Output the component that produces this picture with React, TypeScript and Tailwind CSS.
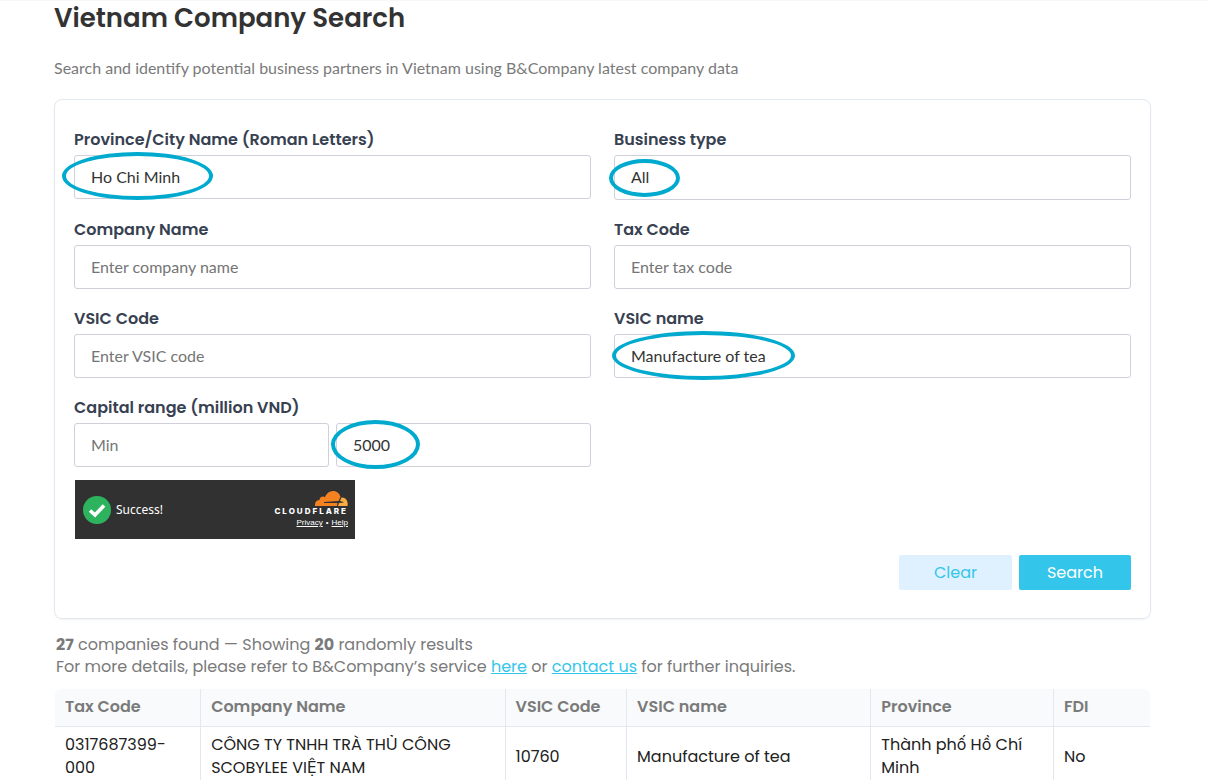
import type { ReactNode } from "react";

const inputClass =
  "block w-full rounded-[3px] border border-[#cfd0dc] bg-white px-4 pb-0.5 font-[Lato,sans-serif] text-base text-[#333] placeholder:text-[#757575] outline-none focus:border-[#34c6ea]";

const columns = [
  { title: "Tax Code", width: "w-[13.3%]" },
  { title: "Company Name", width: "w-[27.8%]" },
  { title: "VSIC Code", width: "w-[11.1%]" },
  { title: "VSIC name", width: "w-[22.3%]" },
  { title: "Province", width: "w-[16.7%]" },
  { title: "FDI", width: "w-[8.8%]" },
];

const rows = [
  [
    "0317687399-000",
    "CÔNG TY TNHH TRÀ THỦ CÔNG SCOBYLEE VIỆT NAM",
    "10760",
    "Manufacture of tea",
    "Thành phố Hồ Chí Minh",
    "No",
  ],
];

function Ring({ className }: { className: string }) {
  return (
    <span
      className={`pointer-events-none absolute rounded-[50%] border-4 border-[#00aace] ${className}`}
    />
  );
}

function Field({ id, label, children }: { id: string; label: string; children: ReactNode }) {
  return (
    <div>
      <label htmlFor={id} className="mb-[3px] block text-base leading-6 font-semibold text-[#374151]">
        {label}
      </label>
      <div className="relative">{children}</div>
    </div>
  );
}

function CloudflareLogo() {
  return (
    <svg viewBox="0 0 66 30" className="h-[15px] w-[33px]" aria-hidden="true">
      <path
        fill="#f6821f"
        d="M0 30C-1 22 4 18 9 18C9 12 15 9 20 12C23 4 29 0 36 0C44 0 49 5 51 12L47 20L18 22L18 24L45 24L44 30Z"
      />
      <path
        fill="#fbad41"
        d="M53 13C61 12 67 20 65 30H46L48 24L57 23V22L50 20Z"
      />
    </svg>
  );
}

function Turnstile() {
  return (
    <div className="mt-[13px] ml-px flex h-[59px] w-[280px] items-center bg-[#313131] px-[7px] font-['Noto_Sans',sans-serif] text-white">
      <svg viewBox="0 0 28 28" className="ml-px size-7" aria-hidden="true">
        <circle cx="14" cy="14" r="14" fill="#2db35e" />
        <path d="M7 14.5L12 19L21 9.5" fill="none" stroke="#fff" strokeWidth="3.6" />
      </svg>
      <span className="ml-[5px] text-xs">Success!</span>
      <div className="ml-auto flex flex-col items-end">
        <CloudflareLogo />
        <span className="font-[Inter,sans-serif] text-[8px] leading-[11px] font-extrabold tracking-[2px]">
          CLOUDFLARE
        </span>
        <span className="flex gap-[3px] font-['Liberation_Sans',sans-serif] text-[8px] leading-[11px]">
          <a href="#privacy" className="underline">Privacy</a>
          <span>•</span>
          <a href="#help" className="underline">Help</a>
        </span>
      </div>
    </div>
  );
}

export default function App() {
  return (
    <main className="border-t border-[#f7f7f7] bg-white pr-14 pl-[54px] font-[Poppins,Inter,sans-serif]">
      <h1 className="text-[26px] leading-[35px] font-semibold text-[#333]">Vietnam Company Search</h1>
      <p className="mt-5 font-[Lato,sans-serif] text-base leading-6 text-[#7a7a7a]">
        Search and identify potential business partners in Vietnam using B&amp;Company latest company data
      </p>

      <form
        className="mt-[19px] rounded-lg border border-[#e2e8f0] px-[19px] py-7 shadow-xs"
        onSubmit={(e) => e.preventDefault()}
      >
        <div className="grid grid-cols-2 gap-x-[23px] gap-y-[18px]">
          <Field id="province" label="Province/City Name (Roman Letters)">
            <input id="province" className={`${inputClass} h-11`} defaultValue="Ho Chi Minh" />
            <Ring className="-top-[3px] -left-3 h-12 w-[151px]" />
          </Field>
          <Field id="type" label="Business type">
            <select id="type" className={`${inputClass} h-[45px] appearance-none`} defaultValue="All">
              <option>All</option>
              <option>Enterprise</option>
              <option>Branch</option>
            </select>
            <Ring className="top-1 -left-[5px] h-[38px] w-[71px]" />
          </Field>
          <Field id="company" label="Company Name">
            <input id="company" className={`${inputClass} h-11`} placeholder="Enter company name" />
          </Field>
          <Field id="tax" label="Tax Code">
            <input id="tax" className={`${inputClass} h-11`} placeholder="Enter tax code" />
          </Field>
          <Field id="vsic-code" label="VSIC Code">
            <input id="vsic-code" className={`${inputClass} h-11`} placeholder="Enter VSIC code" />
          </Field>
          <Field id="vsic-name" label="VSIC name">
            <input id="vsic-name" className={`${inputClass} h-11`} defaultValue="Manufacture of tea" />
            <Ring className="-top-[3px] -left-0.5 h-[49px] w-[183px]" />
          </Field>
          <Field id="capital-min" label="Capital range (million VND)">
            <div className="grid grid-cols-2 gap-[7px]">
              <input id="capital-min" className={`${inputClass} h-11`} placeholder="Min" />
              <div className="relative">
                <input aria-label="Maximum capital" className={`${inputClass} h-11`} defaultValue="5000" />
                <Ring className="-top-[3px] -left-[5px] h-[49px] w-[89px]" />
              </div>
            </div>
          </Field>
        </div>

        <Turnstile />

        <div className="mt-4 flex justify-end gap-[7px] text-base">
          <button type="reset" className="h-[35px] w-[113px] rounded-xs bg-[#dff1fe] text-[#34c6ea]">
            Clear
          </button>
          <button type="submit" className="h-[35px] w-28 rounded-xs bg-[#34c6ea] text-white">
            Search
          </button>
        </div>
      </form>

      <p className="mt-[15px] pl-0.5 text-base leading-[22px] text-[#7a7a7a]">
        <strong>27</strong> companies found — Showing <strong>20</strong> randomly results
        <br />
        For more details, please refer to B&amp;Company’s service{" "}
        <a href="#service" className="text-[#34c6ea] underline">here</a> or{" "}
        <a href="#contact" className="text-[#34c6ea] underline">contact us</a> for further inquiries.
      </p>

      <div className="mx-px mt-[11px] overflow-hidden rounded-t-md">
        <table className="w-full table-fixed text-left text-base">
          <thead className="bg-[#f8fafc] text-[#7a7a7a]">
            <tr className="border-b border-[#e2e8f0]">
              {columns.map((c) => (
                <th
                  key={c.title}
                  className={`${c.width} border-r border-[#e2e8f0] pt-1.5 pr-2 pb-2 pl-2.5 leading-[23px] font-semibold last:border-r-0`}
                >
                  {c.title}
                </th>
              ))}
            </tr>
          </thead>
          <tbody className="text-[#212121]">
            {rows.map((row) => (
              <tr key={row[0]}>
                {row.map((cell, i) => (
                  <td
                    key={i}
                    className="border-r border-[#e2e8f0] py-1.5 pr-2 pl-2.5 leading-[23px] last:border-r-0"
                  >
                    {cell}
                  </td>
                ))}
              </tr>
            ))}
          </tbody>
        </table>
      </div>
    </main>
  );
}
